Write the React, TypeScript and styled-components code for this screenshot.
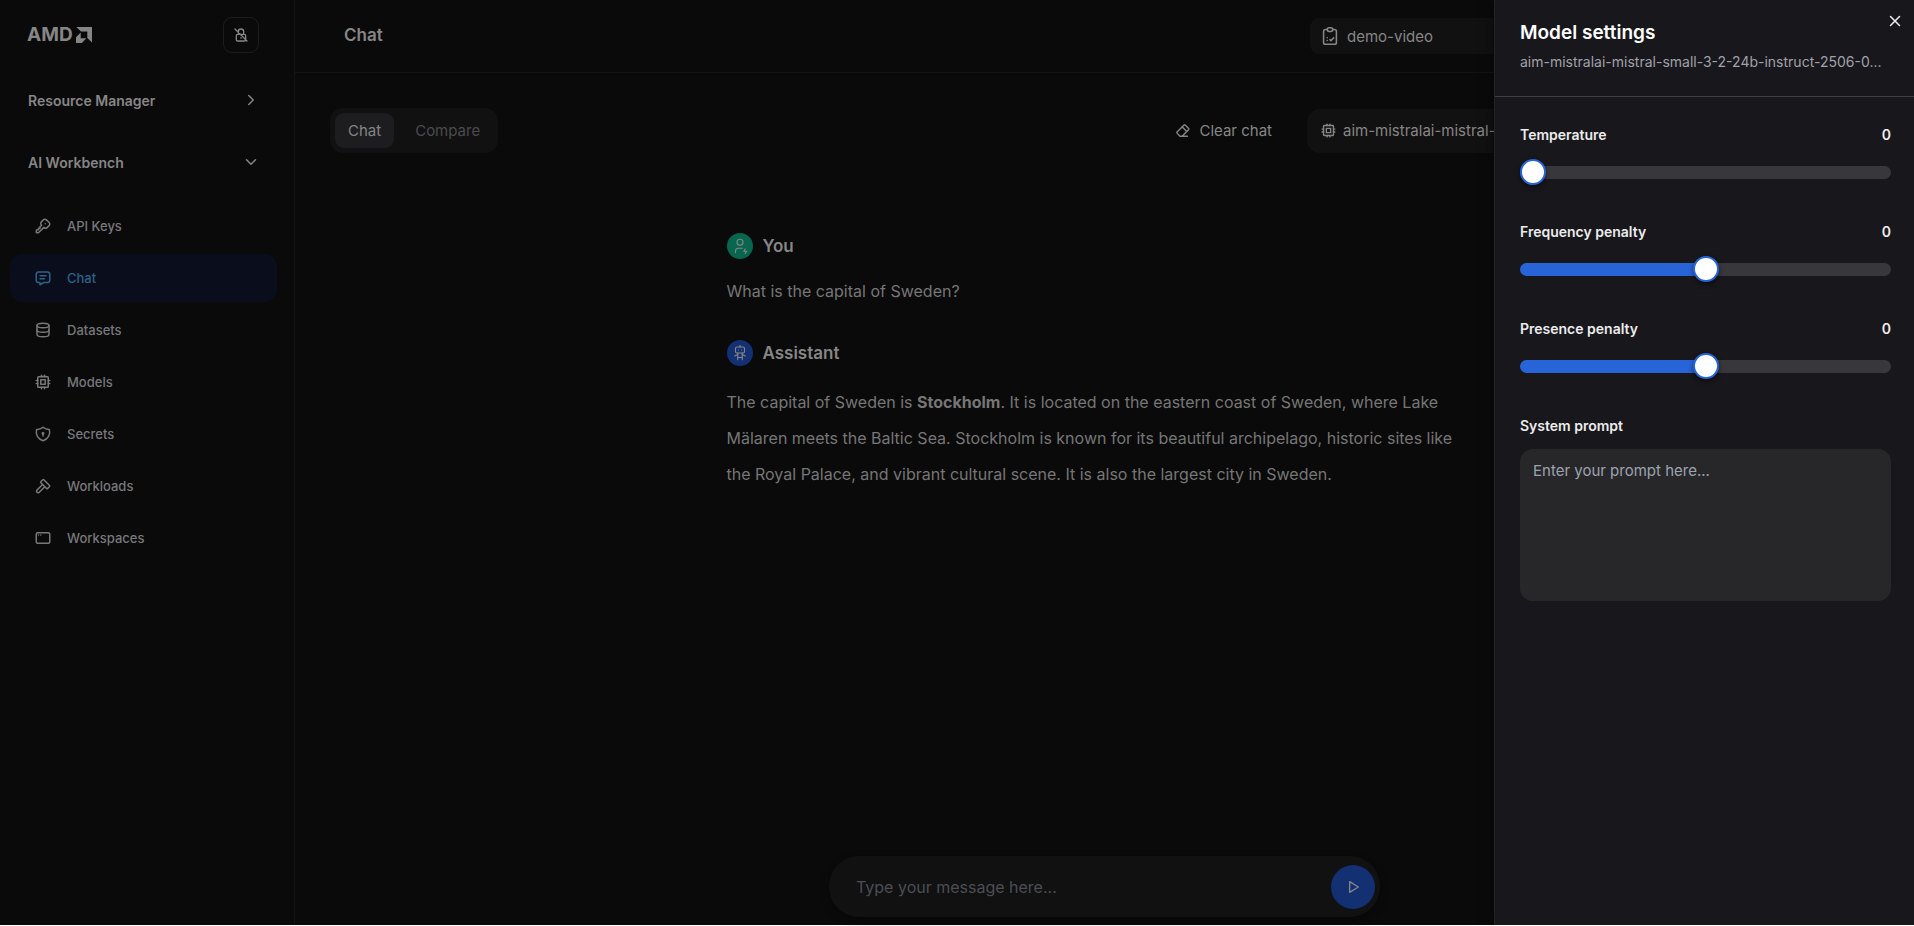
import React, { useState } from "react";
import styled, { createGlobalStyle } from "styled-components";
import {
  TbKey, TbMessage, TbDatabase, TbCpu, TbShieldLock, TbHammer, TbAppWindow,
  TbChevronRight, TbChevronDown, TbEraser, TbUserBolt, TbRobot, TbPlayerPlay,
  TbX,
} from "react-icons/tb";

const GlobalStyle = createGlobalStyle`
  *, *::before, *::after { box-sizing: border-box; }
  html, body, #root { height: 100%; }
  body {
    margin: 0;
    background: #0a0a0a;
    color: #868686;
    font-family: Inter, "Liberation Sans", sans-serif;
    font-size: 14px;
    overflow: hidden;
  }
  button, input, textarea, select { font: inherit; color: inherit; }
  button { border: 0; background: none; padding: 0; cursor: pointer; }
  a { color: inherit; text-decoration: none; }
  svg { display: block; flex: none; }
`;

const Shell = styled.div`
  display: flex;
  height: 100%;
  position: relative;
  border-bottom: 1px solid #fff;
`;

const Sidebar = styled.nav`
  display: flex;
  flex-direction: column;
  flex: none;
  width: 295px;
  border-right: 1px solid #131314;
  padding: 17px 17px 0 10px;
`;

const Brand = styled.div`
  display: flex;
  align-items: center;
  justify-content: space-between;
  padding: 0 18px 0 17px;
`;

const Logo = styled.span`
  display: flex;
  align-items: center;
  gap: 3px;
  font-size: 19px;
  line-height: 24px;
  font-weight: 700;
`;

const LockButton = styled.button`
  display: grid;
  place-items: center;
  width: 36px;
  height: 36px;
  border: 1px solid #1d1d20;
  border-radius: 9px;
`;

const Section = styled.button`
  display: flex;
  align-items: center;
  justify-content: space-between;
  height: 62px;
  padding: 0 17px 0 18px;
  font-weight: 600;
  color: #868686;
`;

const Sections = styled.div`
  display: flex;
  flex-direction: column;
  padding-top: 16px;
`;

const NavList = styled.ul`
  list-style: none;
  margin: 9px 0 0;
  padding: 0;
  display: flex;
  flex-direction: column;
  gap: 4px;
`;

const NavLink = styled.a<{ $active?: boolean }>`
  display: flex;
  align-items: center;
  gap: 15px;
  height: 48px;
  padding: 0 24px;
  border-radius: 12px;
  font-size: 13px;
  font-weight: 500;
  color: ${(p) => (p.$active ? "#2f6088" : "#78787b")};
  background: ${(p) => (p.$active ? "#0a0e1c" : "transparent")};
`;

const Main = styled.main`
  display: flex;
  flex-direction: column;
  flex: 1;
  min-width: 0;
`;

const Header = styled.header`
  display: flex;
  align-items: flex-start;
  justify-content: space-between;
  flex: none;
  height: 73px;
  padding: 18px 204px 0 49px;
  border-bottom: 1px solid #131314;
`;

const Title = styled.h1`
  margin: 0;
  font-size: 17px;
  line-height: 34px;
  font-weight: 600;
`;

const ProjectButton = styled.button`
  display: flex;
  align-items: center;
  gap: 6px;
  width: 400px;
  height: 36px;
  padding: 0 9px;
  border-radius: 9px;
  background: #111111;
  font-size: 15px;
`;

const Toolbar = styled.div`
  display: flex;
  align-items: center;
  flex: none;
  padding: 35px 211px 0 35px;
`;

const Tabs = styled.div`
  display: flex;
  gap: 8px;
  padding: 5px;
  border-radius: 13px;
  background: #111111;
  margin-right: auto;
`;

const Tab = styled.button<{ $active?: boolean }>`
  height: 35px;
  padding: 0 13px;
  border-radius: 9px;
  font-size: 15px;
  color: ${(p) => (p.$active ? "#858585" : "#4b4b50")};
  background: ${(p) => (p.$active ? "#1d1d20" : "transparent")};
`;

const ClearButton = styled.button`
  display: flex;
  align-items: center;
  gap: 8px;
  height: 44px;
  margin-right: 35px;
  font-size: 15px;
`;

const ModelButton = styled.button`
  display: flex;
  align-items: center;
  gap: 6px;
  width: 396px;
  height: 44px;
  padding: 0 13px;
  border-radius: 13px;
  background: #111111;
  font-size: 15px;
  white-space: nowrap;
  overflow: hidden;
`;

const Conversation = styled.section`
  flex: 1;
  min-height: 0;
  width: 100%;
  max-width: 820px;
  margin: 0 auto;
  padding: 79px 40px 0 32px;
`;

const Speaker = styled.div`
  display: flex;
  align-items: center;
  gap: 10px;
  height: 27px;
  font-size: 17px;
  font-weight: 600;
`;

const Avatar = styled.span<{ $color: string }>`
  display: grid;
  place-items: center;
  width: 26px;
  height: 26px;
  border-radius: 50%;
  background: ${(p) => p.$color};
  svg { stroke-width: 1.5; }
`;

const Message = styled.p<{ $reply?: boolean }>`
  margin: ${(p) => (p.$reply ? "18px" : "14px")} 0 30px;
  font-size: 16px;
  line-height: 36px;
  color: #767676;
`;

const Composer = styled.form`
  display: flex;
  align-items: center;
  flex: none;
  width: 100%;
  max-width: 551px;
  height: 61px;
  margin: 0 auto 8px;
  padding: 0 5px 0 27px;
  border-radius: 30px;
  background: #111111;
  box-shadow: 0 4px 10px rgba(0, 0, 0, 0.3);
`;

const ComposerInput = styled.input`
  flex: 1;
  min-width: 0;
  border: 0;
  outline: 0;
  background: none;
  padding: 0;
  font-size: 16px;
  &::placeholder { color: #4c4e54; opacity: 1; }
`;

const SendButton = styled.button`
  display: grid;
  place-items: center;
  width: 44px;
  height: 44px;
  border-radius: 50%;
  background: #123072;
`;

const Drawer = styled.aside`
  position: absolute;
  top: 0;
  right: 0;
  bottom: 0;
  width: 420px;
  display: flex;
  flex-direction: column;
  background: #18171c;
  border-left: 1px solid #222225;
  color: #ececec;
  box-shadow: 0 0 12px rgba(0, 0, 0, 0.6);
  clip-path: inset(0 0 0 -20px);
`;

const DrawerHeader = styled.header`
  height: 97px;
  flex: none;
  padding: 19px 32px 0 25px;
  border-bottom: 1px solid #3f3f42;
`;

const DrawerTitle = styled.h2`
  margin: 0;
  font-size: 19px;
  line-height: 28px;
  font-weight: 600;
  color: #fff;
`;

const DrawerSubtitle = styled.p`
  margin: 3px 0 0;
  line-height: 24px;
  color: #a1a1aa;
  white-space: nowrap;
`;

const CloseButton = styled.button`
  position: absolute;
  top: 10px;
  right: 8px;
  display: grid;
  place-items: center;
  width: 22px;
  height: 22px;
`;

const Fields = styled.div`
  display: flex;
  flex-direction: column;
  gap: 34px;
  padding: 26px 23px 0 25px;
`;

const Field = styled.div`
  display: flex;
  flex-direction: column;
  gap: 11px;
`;

const FieldHead = styled.div`
  display: flex;
  justify-content: space-between;
  line-height: 24px;
  font-weight: 600;
`;

const Range = styled.input<{ $fill: number }>`
  appearance: none;
  width: 100%;
  height: 28px;
  margin: 0;
  background: none;
  &::-webkit-slider-runnable-track {
    height: 13px;
    border-radius: 7px;
    background: linear-gradient(to right, #2764d8 ${(p) => p.$fill}%, #38373c ${(p) => p.$fill}%);
  }
  &::-webkit-slider-thumb {
    appearance: none;
    width: 26px;
    height: 26px;
    margin-top: -7px;
    border: 2px solid #2764d8;
    border-radius: 50%;
    background: #fff;
    box-shadow: 0 2px 5px rgba(0, 0, 0, 0.5);
  }
`;

const Prompt = styled.textarea`
  width: 100%;
  height: 152px;
  padding: 10px 13px;
  border: 0;
  border-radius: 13px;
  outline: 0;
  resize: none;
  background: #27272a;
  font-size: 15px;
  line-height: 24px;
  &::placeholder { color: #9ca3af; opacity: 1; }
`;

const LogoArrow = () => (
  <svg width="16" height="16" viewBox="0 0 16 16" fill="currentColor" aria-hidden="true">
    <path d="M.3 0H16v15.5l-4.7-4.6V4.6H5z" />
    <path d="M4.7 5.6 0 10.2V16h5.8l4.6-4.7H4.7z" />
  </svg>
);

const LockSlash = () => (
  <svg width="16" height="16" viewBox="0 0 24 24" fill="none" stroke="#868686" strokeWidth="2" strokeLinecap="round">
    <path d="M5 13a2 2 0 0 1 2-2h10a2 2 0 0 1 2 2v6a2 2 0 0 1-2 2H7a2 2 0 0 1-2-2zM8 11V7a4 4 0 0 1 8 0v4M3 3l18 18M12 16v1" />
  </svg>
);

const ProjectIcon = () => (
  <svg width="22" height="22" viewBox="0 0 24 24" fill="none" stroke="currentColor" strokeWidth="1.7" strokeLinecap="round" strokeLinejoin="round">
    <path d="M9 5H7a2 2 0 0 0-2 2v12a2 2 0 0 0 2 2h10a2 2 0 0 0 2-2V7a2 2 0 0 0-2-2h-2" />
    <path d="M9 5a2 2 0 0 1 2-2h2a2 2 0 0 1 2 2 2 2 0 0 1-2 2h-2a2 2 0 0 1-2-2z" />
    <path d="M9 14h.01M9 17h.01M12 16l1 1 3-3" />
  </svg>
);

const nav = [
  { label: "API Keys", Icon: TbKey },
  { label: "Chat", Icon: TbMessage },
  { label: "Datasets", Icon: TbDatabase },
  { label: "Models", Icon: TbCpu },
  { label: "Secrets", Icon: TbShieldLock },
  { label: "Workloads", Icon: TbHammer },
  { label: "Workspaces", Icon: TbAppWindow },
];

function Slider({ id, label, min, max }: { id: string; label: string; min: number; max: number }) {
  const [value, setValue] = useState(0);
  return (
    <Field>
      <FieldHead>
        <label htmlFor={id}>{label}</label>
        <output htmlFor={id}>{value}</output>
      </FieldHead>
      <Range id={id} type="range" min={min} max={max} step={0.1} value={value}
        $fill={((value - min) / (max - min)) * 100}
        onChange={(e) => setValue(Number(e.target.value))} />
    </Field>
  );
}

export default function App() {
  return (
    <>
      <GlobalStyle />
      <Shell>
        <Sidebar>
          <Brand>
            <Logo>AMD<LogoArrow /></Logo>
            <LockButton aria-label="Unlock sidebar"><LockSlash /></LockButton>
          </Brand>
          <Sections>
            <Section>Resource Manager<TbChevronRight size={18} /></Section>
            <Section>AI Workbench<TbChevronDown size={18} /></Section>
          </Sections>
          <NavList>
            {nav.map(({ label, Icon }) => (
              <li key={label}>
                <NavLink href="#" $active={label === "Chat"}><Icon size={18} />{label}</NavLink>
              </li>
            ))}
          </NavList>
        </Sidebar>
        <Main>
          <Header>
            <Title>Chat</Title>
            <ProjectButton><ProjectIcon />demo-video</ProjectButton>
          </Header>
          <Toolbar>
            <Tabs>
              <Tab $active>Chat</Tab>
              <Tab>Compare</Tab>
            </Tabs>
            <ClearButton><TbEraser size={17} />Clear chat</ClearButton>
            <ModelButton><TbCpu size={17} />aim-mistralai-mistral-</ModelButton>
          </Toolbar>
          <Conversation>
            <Speaker><Avatar $color="#08664f"><TbUserBolt size={18} /></Avatar>You</Speaker>
            <Message>What is the capital of Sweden?</Message>
            <Speaker><Avatar $color="#123072"><TbRobot size={18} /></Avatar>Assistant</Speaker>
            <Message $reply>
              The capital of Sweden is <strong>Stockholm</strong>. It is located on the eastern coast of Sweden, where Lake Mälaren meets the Baltic Sea. Stockholm is known for its beautiful archipelago, historic sites like the Royal Palace, and vibrant cultural scene. It is also the largest city in Sweden.
            </Message>
          </Conversation>
          <Composer>
            <ComposerInput aria-label="Message" placeholder="Type your message here..." />
            <SendButton type="button" aria-label="Send"><TbPlayerPlay size={16} /></SendButton>
          </Composer>
        </Main>
        <Drawer>
          <DrawerHeader>
            <DrawerTitle>Model settings</DrawerTitle>
            <DrawerSubtitle>aim-mistralai-mistral-small-3-2-24b-instruct-2506-0...</DrawerSubtitle>
            <CloseButton aria-label="Close"><TbX size={18} /></CloseButton>
          </DrawerHeader>
          <Fields>
            <Slider id="temperature" label="Temperature" min={0} max={2} />
            <Slider id="frequency" label="Frequency penalty" min={-2} max={2} />
            <Slider id="presence" label="Presence penalty" min={-2} max={2} />
            <Field>
              <FieldHead><label htmlFor="prompt">System prompt</label></FieldHead>
              <Prompt id="prompt" placeholder="Enter your prompt here..." />
            </Field>
          </Fields>
        </Drawer>
      </Shell>
    </>
  );
}
